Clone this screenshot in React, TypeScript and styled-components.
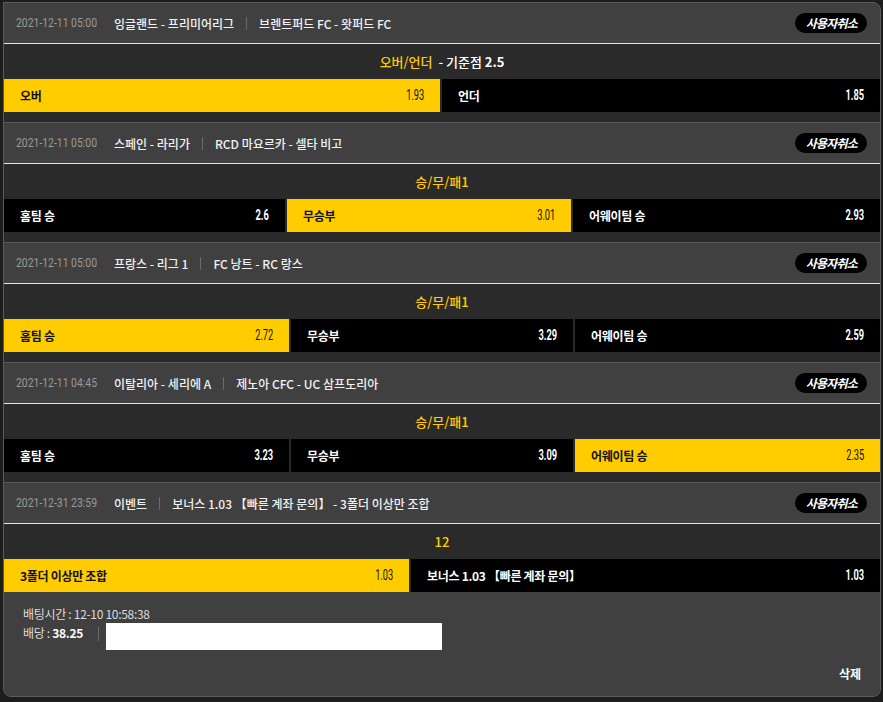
import React from 'react';
import styled, { createGlobalStyle } from 'styled-components';

const GlobalStyle = createGlobalStyle`
  html, body {
    margin: 0;
    padding: 0;
    background: #1d1d1d;
    font-family: "Noto Sans CJK KR", "Noto Sans", sans-serif;
  }
`;

type Pick = {
    label: React.ReactNode;
    odds: string;
    sel?: boolean;
};

type Game = {
    date: string;
    league: string;
    match: React.ReactNode;
    market: React.ReactNode;
    cols: string;
    picks: Pick[];
};

const Page = styled.div`
    padding: 2px 2px 0 3px;
`;

const Slip = styled.div`
    border: 1px solid #5c5c5c;
    border-radius: 0 8px 8px 8px;
    overflow: hidden;
    background: #404040;
`;

const Header = styled.div<{ first?: boolean }>`
    display: flex;
    align-items: center;
    padding: 0 13px 0 12px;
    background: #404040;
    border-top: ${props => props.first ? 'none' : '1px solid #565656'};
    border-bottom: 1px solid #e4e4e4;
    box-sizing: border-box;
    height: ${props => props.first ? '41px' : '42px'};
`;

const DateSlot = styled.span`
    display: flex;
    align-items: center;
    width: 98px;
    flex-shrink: 0;
`;

// no condensed face installed, so squeeze Roboto
const DateText = styled.span`
    display: inline-block;
    font-family: "Roboto", sans-serif;
    font-size: 13px;
    line-height: 16px;
    color: #9a9a9a;
    transform: scaleX(0.8);
    transform-origin: left center;
    white-space: nowrap;
`;

const League = styled.span`
    font-size: 12px;
    font-weight: 500;
    color: #f2f2f2;
    white-space: nowrap;
`;

const Divider = styled.span`
    display: inline-block;
    width: 1px;
    height: 13px;
    background: #6a6a6a;
    margin: 0 12px;
`;

const CancelBadge = styled.span`
    margin-left: auto;
    background: #000;
    color: #fff;
    font-size: 12px;
    font-weight: 700;
    font-style: italic;
    letter-spacing: -0.8px;
    height: 20px;
    line-height: 20px;
    padding: 0 10px 0 11px;
    border-radius: 10px;
`;

const Body = styled.div<{ last?: boolean }>`
    background: #2a2a2a;
    padding-bottom: ${props => props.last ? '0' : '10px'};
`;

const MarketTitle = styled.div`
    height: 35px;
    display: flex;
    align-items: center;
    justify-content: center;
    font-size: 13px;
    font-weight: 500;
    color: #fff;
`;

const Yellow = styled.span`
    color: #ffcc00;
`;

const Strong = styled.b`
    font-weight: 700;
    color: #fff;
`;

const PickRow = styled.div<{ cols: string }>`
    display: grid;
    grid-template-columns: ${props => props.cols};
    column-gap: 2px;
`;

const PickCell = styled.div<{ sel?: boolean }>`
    height: 33px;
    display: flex;
    align-items: center;
    justify-content: space-between;
    padding: 0 16px;
    background: ${props => props.sel ? '#ffcc00' : '#000'};
    color: ${props => props.sel ? '#111' : '#fff'};
    font-size: 12px;
    font-weight: 700;
    letter-spacing: -0.3px;
    white-space: nowrap;
`;

const Odds = styled.span<{ sel?: boolean }>`
    display: inline-block;
    font-family: "Roboto", sans-serif;
    font-size: 14.5px;
    line-height: 16px;
    font-weight: ${props => props.sel ? 400 : 700};
    letter-spacing: 0;
    transform: scaleX(0.64);
    transform-origin: right center;
`;

const Info = styled.div`
    padding: 12px 19px 0;
    height: 58px;
    box-sizing: border-box;
    font-size: 12px;
    color: #dcdcdc;
    letter-spacing: -0.3px;
`;

const InfoLine = styled.div`
    height: 19px;
    line-height: 19px;
`;

const PayoutRow = styled.div`
    display: flex;
    align-items: flex-start;
`;

const PayoutText = styled.span`
    line-height: 19px;
    width: 75px;
    display: flex;
    align-items: center;
`;

const SmallDivider = styled.span`
    display: inline-block;
    width: 1px;
    height: 14px;
    background: #6a6a6a;
    margin: 4px 7px 0 0;
`;

const MemoBox = styled.div`
    width: 336px;
    height: 27px;
    background: #fff;
`;

const Footer = styled.div`
    height: 46px;
    display: flex;
    align-items: center;
    justify-content: flex-end;
    padding: 0 19px;
    background: #404040;
`;

const DeleteButton = styled.span`
    color: #fff;
    font-size: 12px;
    font-weight: 700;
`;

const games: Game[] = [
    {
        date: '2021-12-11 05:00',
        league: '잉글랜드 - 프리미어리그',
        match: '브렌트퍼드 FC - 왓퍼드 FC',
        market: <><Yellow>오버/언더</Yellow>&nbsp; - 기준점 <Strong>&nbsp;2.5</Strong></>,
        cols: '436px 1fr',
        picks: [
            { label: '오버', odds: '1.93', sel: true },
            { label: '언더', odds: '1.85' },
        ],
    },
    {
        date: '2021-12-11 05:00',
        league: '스페인 - 라리가',
        match: 'RCD 마요르카 - 셀타 비고',
        market: <Yellow>승/무/패1</Yellow>,
        cols: '281px 284px 1fr',
        picks: [
            { label: '홈팀 승', odds: '2.6' },
            { label: '무승부', odds: '3.01', sel: true },
            { label: '어웨이팀 승', odds: '2.93' },
        ],
    },
    {
        date: '2021-12-11 05:00',
        league: '프랑스 - 리그 1',
        match: 'FC 낭트 - RC 랑스',
        market: <Yellow>승/무/패1</Yellow>,
        cols: '285px 282px 1fr',
        picks: [
            { label: '홈팀 승', odds: '2.72', sel: true },
            { label: '무승부', odds: '3.29' },
            { label: '어웨이팀 승', odds: '2.59' },
        ],
    },
    {
        date: '2021-12-11 04:45',
        league: '이탈리아 - 세리에 A',
        match: '제노아 CFC - UC 삼프도리아',
        market: <Yellow>승/무/패1</Yellow>,
        cols: '285px 282px 1fr',
        picks: [
            { label: '홈팀 승', odds: '3.23' },
            { label: '무승부', odds: '3.09' },
            { label: '어웨이팀 승', odds: '2.35', sel: true },
        ],
    },
    {
        date: '2021-12-31 23:59',
        league: '이벤트',
        match: '보너스 1.03 【빠른 계좌 문의】 - 3폴더 이상만 조합',
        market: <Yellow>12</Yellow>,
        cols: '405px 1fr',
        picks: [
            { label: '3폴더 이상만 조합', odds: '1.03', sel: true },
            { label: '보너스 1.03 【빠른 계좌 문의】', odds: '1.03' },
        ],
    },
];

const GameBlock = ({ game, first, last }: { game: Game; first: boolean; last: boolean }) => (
    <>
        <Header first={first}>
            <DateSlot><DateText>{game.date}</DateText></DateSlot>
            <League>{game.league}</League>
            <Divider />
            <League>{game.match}</League>
            <CancelBadge>사용자취소</CancelBadge>
        </Header>
        <Body last={last}>
            <MarketTitle>{game.market}</MarketTitle>
            <PickRow cols={game.cols}>
                {game.picks.map((p, i) => (
                    <PickCell key={i} sel={p.sel}>
                        <span>{p.label}</span>
                        <Odds sel={p.sel}>{p.odds}</Odds>
                    </PickCell>
                ))}
            </PickRow>
        </Body>
    </>
);

export default function App() {
    return (
        <Page>
            <GlobalStyle />
            <Slip>
                {games.map((g, i) => (
                    <GameBlock key={i} game={g} first={i === 0} last={i === games.length - 1} />
                ))}
                <Info>
                    <InfoLine>배팅시간 : 12-10 10:58:38</InfoLine>
                    <PayoutRow>
                        <PayoutText>배당 :&nbsp;<Strong>38.25</Strong></PayoutText>
                        <SmallDivider />
                        <MemoBox />
                    </PayoutRow>
                </Info>
                <Footer>
                    <DeleteButton>삭제</DeleteButton>
                </Footer>
            </Slip>
        </Page>
    );
}
